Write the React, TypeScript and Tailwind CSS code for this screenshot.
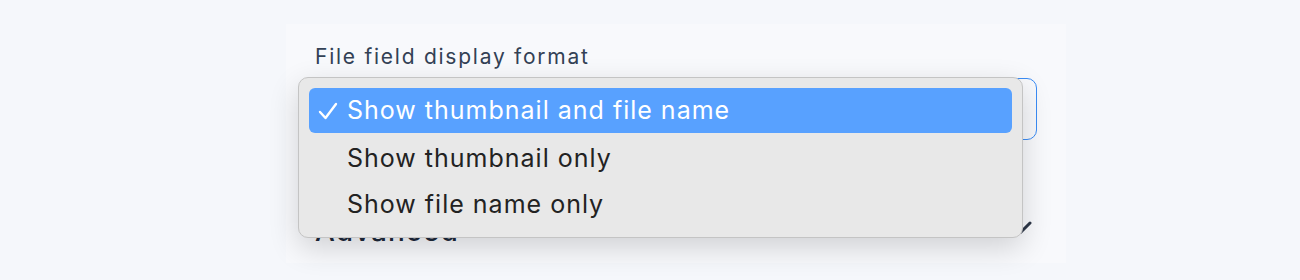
import { useState } from "react";

const OPTIONS = [
  "Show thumbnail and file name",
  "Show thumbnail only",
  "Show file name only",
];

function FormatSelect() {
  const [selected] = useState(0);

  return (
    <div className="relative mt-[6px]">
      <div className="h-[62px] w-[722px] rounded-[10px] border border-[#3b8cf5] bg-[#f8f9fc]" />

      {/* native-looking popup menu */}
      <div className="absolute left-[-17px] top-[-1px] z-10 w-[725px] rounded-[10px] border border-[#c4c4c4] bg-[#e8e8e8] px-[10px] pb-[10px] pt-[10px] shadow-[0_10px_30px_rgba(0,0,0,0.16)]">
        {OPTIONS.map((opt, i) => (
          <div
            key={opt}
            className={
              i === selected
                ? "mb-[2px] flex h-[45px] items-center rounded-[6px] bg-[#58a1ff] text-white"
                : "flex h-[46px] items-center text-[#222222]"
            }
          >
            <span className="flex w-[38px] justify-center">
              {i === selected && (
                <svg width="20" height="20" viewBox="0 0 20 20" fill="none">
                  <path
                    d="M2 11l5.5 6L18 3"
                    stroke="white"
                    strokeWidth="2.4"
                    strokeLinecap="round"
                    strokeLinejoin="round"
                  />
                </svg>
              )}
            </span>
            <span className="text-[25px] leading-none tracking-[1px]">{opt}</span>
          </div>
        ))}
      </div>
    </div>
  );
}

export default function App() {
  return (
    <div
      className="min-h-[280px] bg-[#f5f7fb] pl-[286px] pt-[24px]"
      style={{ fontFamily: "Inter, 'Noto Sans', sans-serif" }}
    >
      <div className="h-[239px] w-[780px] bg-[#f8f9fc] pl-[29px] pt-[18px]">
        <div className="text-[21px] leading-[30px] tracking-[1.75px] text-[#334155]">
          File field display format
        </div>
        <FormatSelect />
        <div className="mt-[70px] flex w-[722px] items-start justify-between">
          <span className="mt-[4px] text-[28px] font-medium leading-[34px] tracking-[1px] text-[#1e293b]">
            Advanced
          </span>
          <svg
            width="24"
            height="24"
            viewBox="0 0 24 24"
            fill="none"
            stroke="#2d3748"
            strokeWidth="3"
            strokeLinecap="round"
            strokeLinejoin="round"
            className="mr-[4px] mt-[5px]"
          >
            <path d="M3 8l9 9 9-9" />
          </svg>
        </div>
      </div>
    </div>
  );
}
